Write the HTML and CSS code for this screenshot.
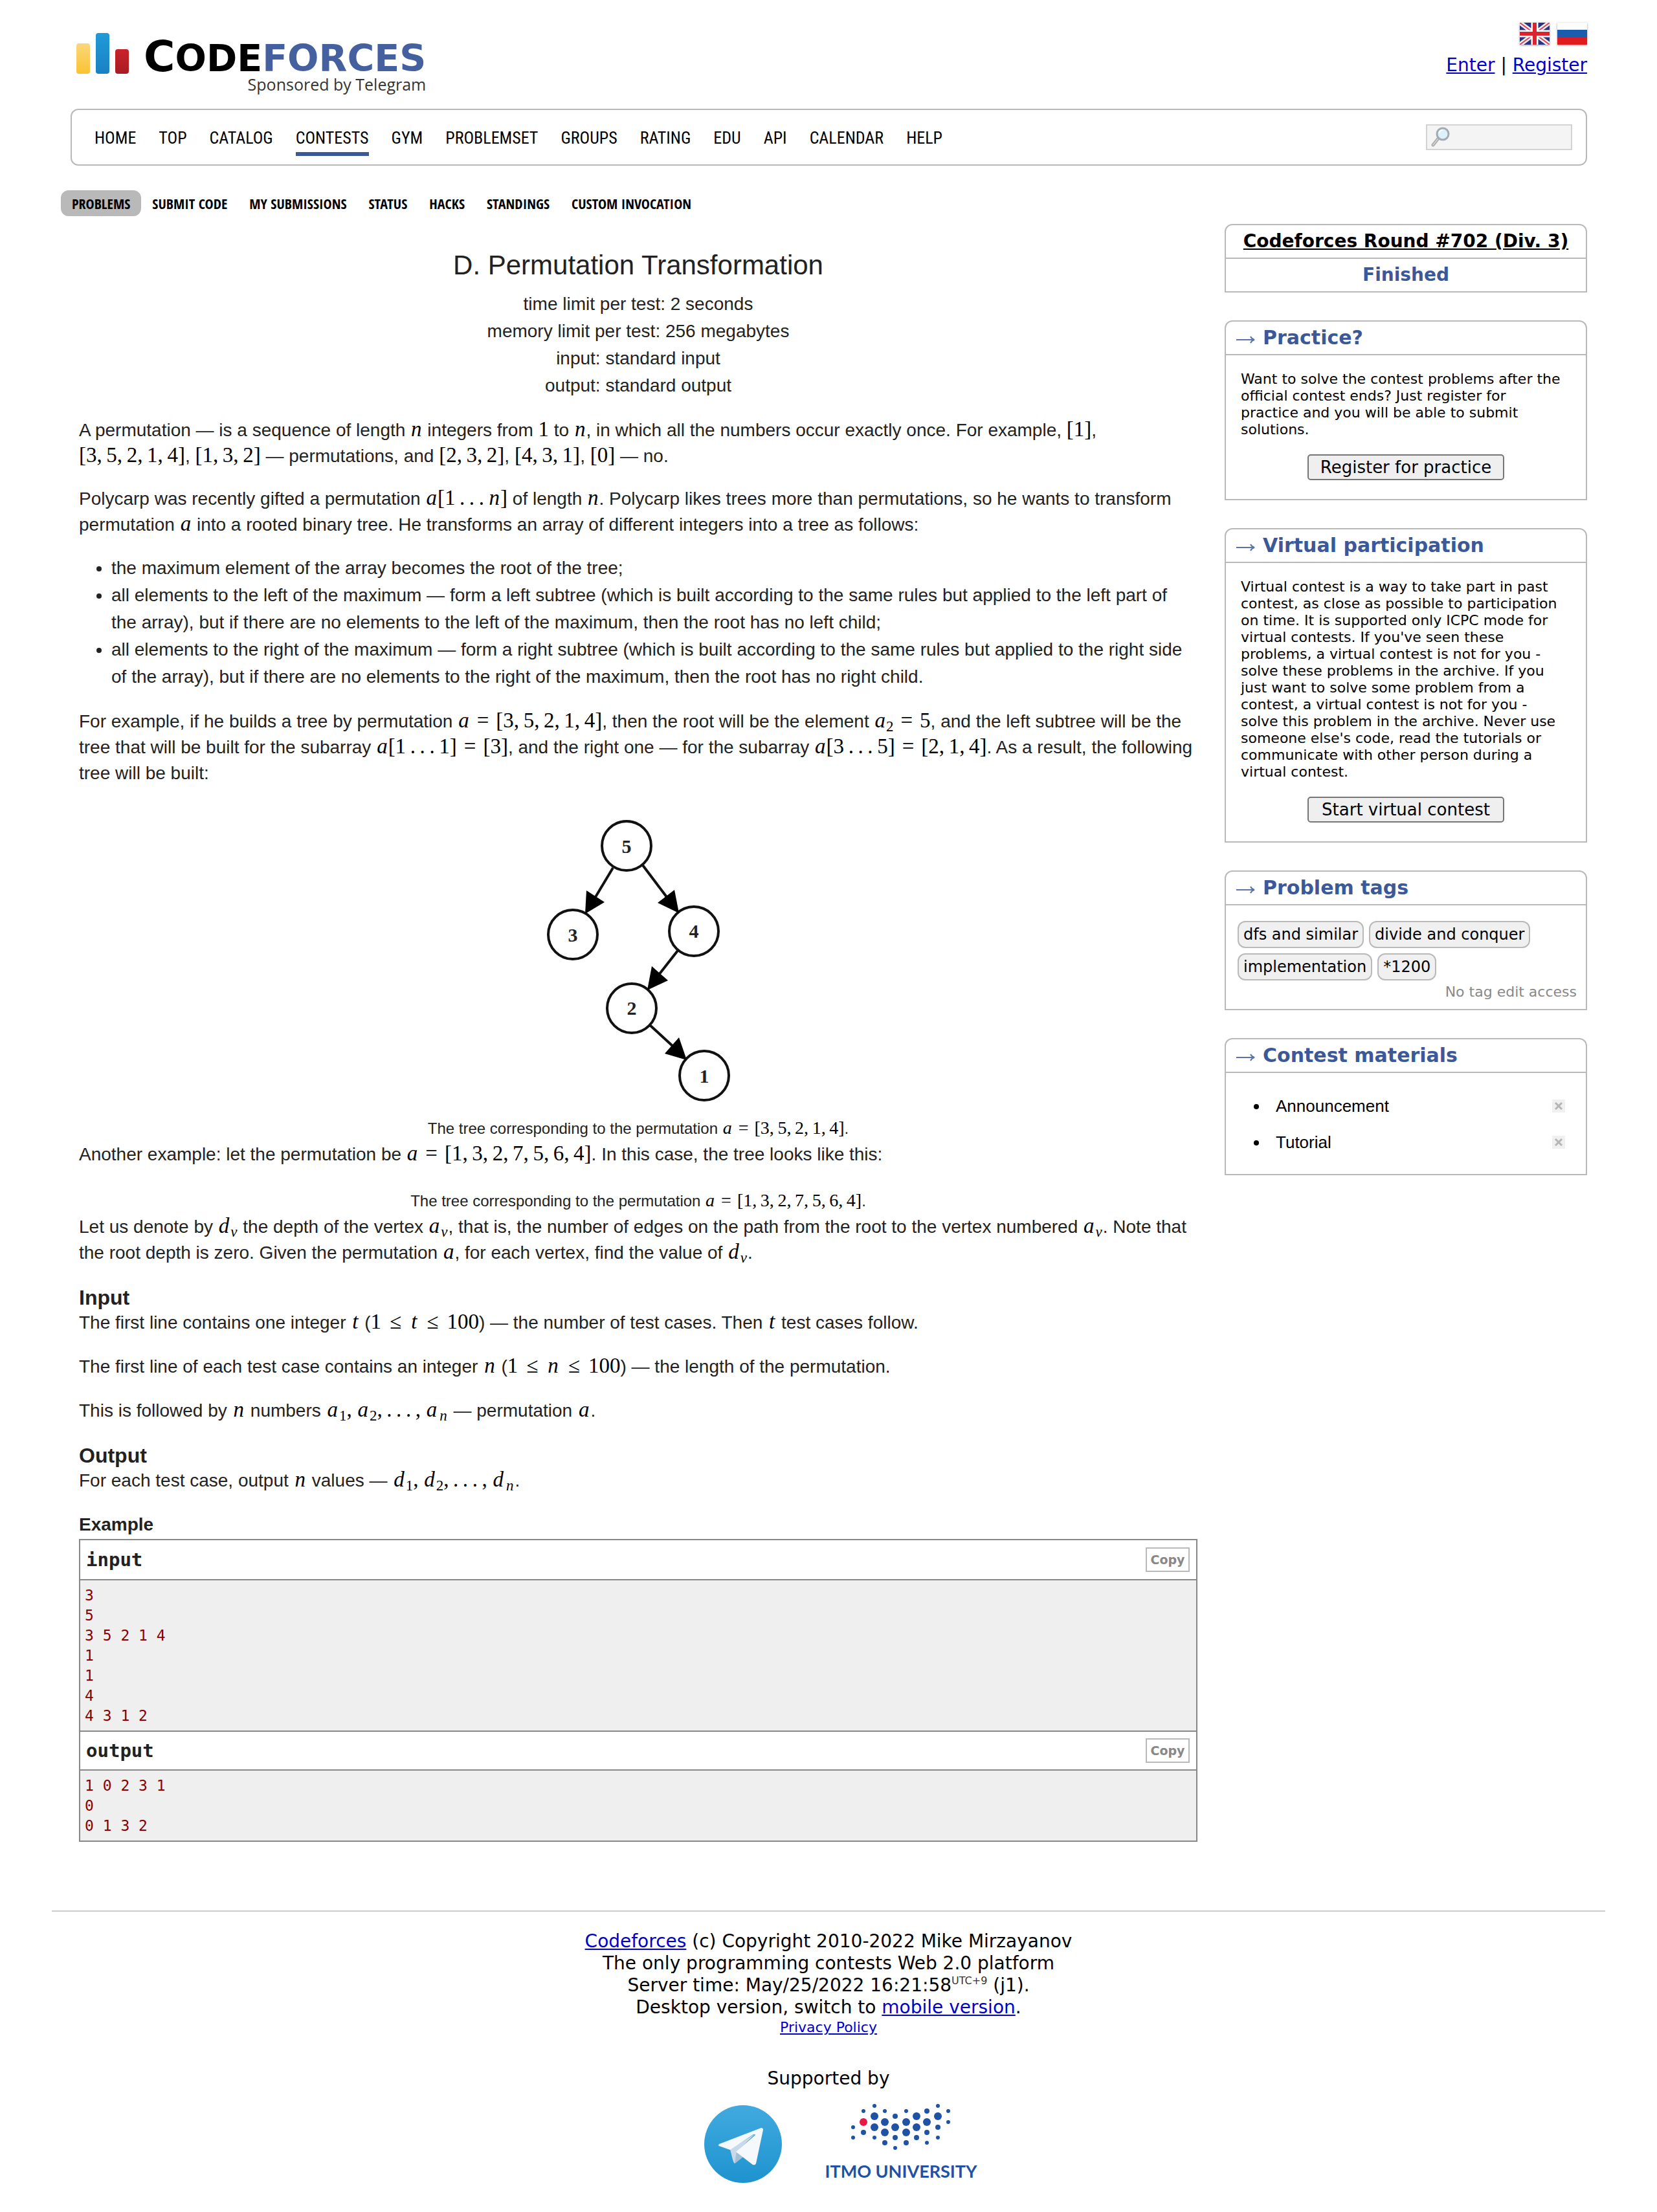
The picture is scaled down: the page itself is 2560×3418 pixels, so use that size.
FILE: index.html
```html
<!DOCTYPE html>
<html lang="en">
<head>
<meta charset="utf-8">
<title>Problem - D - Codeforces</title>
<link rel="stylesheet" href="styles.css">
</head>
<body>
<div class="page">
  <header class="header">
    <a class="brand" href="#">
      <svg class="bars" width="82" height="64" viewBox="0 0 82 64" aria-hidden="true">
        <defs>
          <linearGradient id="gy" x1="0" y1="0" x2="0" y2="1"><stop offset="0" stop-color="#fbd77b"/><stop offset="1" stop-color="#f9c332"/></linearGradient>
          <linearGradient id="gb" x1="0" y1="0" x2="0" y2="1"><stop offset="0" stop-color="#219bd7"/><stop offset="1" stop-color="#1a80c4"/></linearGradient>
          <linearGradient id="gr" x1="0" y1="0" x2="0" y2="1"><stop offset="0" stop-color="#c9222a"/><stop offset="1" stop-color="#a91c23"/></linearGradient>
        </defs>
        <rect x="0" y="16" width="21" height="47" rx="4" fill="url(#gy)"/>
        <rect x="30" y="0" width="21" height="63" rx="4" fill="url(#gb)"/>
        <rect x="60" y="25" width="21" height="38" rx="4" fill="url(#gr)"/>
      </svg>
      <span class="brand-text">
        <span class="wordmark"><span class="initial">C</span>ODE<span class="forces">FORCES</span></span>
        <span class="sponsor">Sponsored by Telegram</span>
      </span>
    </a>
    <div class="account">
      <div class="flags">
        <a href="#" aria-label="English"><svg class="flag" width="46" height="34" viewBox="0 0 46 34">
          <rect width="46" height="34" fill="#2b3480"/>
          <path d="M0 0L46 34M46 0L0 34" stroke="#f3f1f4" stroke-width="7"/>
          <path d="M0 0L46 34M46 0L0 34" stroke="#d8485a" stroke-width="2"/>
          <path d="M23 0V34M0 17H46" stroke="#fff" stroke-width="11"/>
          <path d="M23 0V34M0 17H46" stroke="#dc2430" stroke-width="6"/>
        </svg></a>
        <a href="#" aria-label="Russian"><svg class="flag" width="46" height="34" viewBox="0 0 46 34">
          <rect width="46" height="34" fill="#fcfcfc"/>
          <rect y="11" width="46" height="12" fill="#1a5cae"/>
          <rect y="23" width="46" height="11" fill="#df1b1f"/>
        </svg></a>
      </div>
      <div class="auth"><a href="#">Enter</a> | <a href="#">Register</a></div>
    </div>
  </header>

  <nav class="mainmenu">
    <ul>
      <li><a href="#">HOME</a></li>
      <li><a href="#">TOP</a></li>
      <li><a href="#">CATALOG</a></li>
      <li><a class="current" href="#">CONTESTS</a></li>
      <li><a href="#">GYM</a></li>
      <li><a href="#">PROBLEMSET</a></li>
      <li><a href="#">GROUPS</a></li>
      <li><a href="#">RATING</a></li>
      <li><a href="#">EDU</a></li>
      <li><a href="#">API</a></li>
      <li><a href="#">CALENDAR</a></li>
      <li><a href="#">HELP</a></li>
    </ul>
    <form class="search">
      <svg width="30" height="32" viewBox="0 0 30 32" aria-hidden="true">
        <path d="M3 28L11 18" stroke="#a9a9a9" stroke-width="5" stroke-linecap="round"/>
        <path d="M3 28L11 18" stroke="#d0d0d0" stroke-width="2" stroke-linecap="round"/>
        <circle cx="18" cy="11" r="9" fill="#dcf1fb" stroke="#a3abb1" stroke-width="3"/>
        <path d="M12 10a6 6 0 0 1 6-5" stroke="#fff" stroke-width="2" fill="none"/>
      </svg>
      <input type="text" aria-label="Search">
    </form>
  </nav>

  <nav class="submenu">
    <a class="current" href="#">PROBLEMS</a>
    <a href="#">SUBMIT CODE</a>
    <a href="#">MY SUBMISSIONS</a>
    <a href="#">STATUS</a>
    <a href="#">HACKS</a>
    <a href="#">STANDINGS</a>
    <a href="#">CUSTOM INVOCATION</a>
  </nav>

  <div class="columns">
    <main class="statement">
      <h1>D. Permutation Transformation</h1>
      <div class="limits">
        <div>time limit per test: 2 seconds</div>
        <div>memory limit per test: 256 megabytes</div>
        <div>input: standard input</div>
        <div>output: standard output</div>
      </div>

      <p>A permutation — is a sequence of length <span class="m"><i>n</i></span> integers from <span class="m">1</span> to <span class="m"><i>n</i></span>, in which all the numbers occur exactly once. For example, <span class="m">[1]</span>, <span class="m">[3,&thinsp;5,&thinsp;2,&thinsp;1,&thinsp;4]</span>, <span class="m">[1,&thinsp;3,&thinsp;2]</span> — permutations, and <span class="m">[2,&thinsp;3,&thinsp;2]</span>, <span class="m">[4,&thinsp;3,&thinsp;1]</span>, <span class="m">[0]</span> — no.</p>
      <p>Polycarp was recently gifted a permutation <span class="m"><i>a</i>[1&thinsp;.&thinsp;.&thinsp;.&thinsp;<i>n</i>]</span> of length <span class="m"><i>n</i></span>. Polycarp likes trees more than permutations, so he wants to transform permutation <span class="m"><i>a</i></span> into a rooted binary tree. He transforms an array of different integers into a tree as follows:</p>
      <ul class="rules">
        <li>the maximum element of the array becomes the root of the tree;</li>
        <li>all elements to the left of the maximum — form a left subtree (which is built according to the same rules but applied to the left part of the array), but if there are no elements to the left of the maximum, then the root has no left child;</li>
        <li>all elements to the right of the maximum — form a right subtree (which is built according to the same rules but applied to the right side of the array), but if there are no elements to the right of the maximum, then the root has no right child.</li>
      </ul>
      <p>For example, if he builds a tree by permutation <span class="m"><i>a</i><b>=</b>[3,&thinsp;5,&thinsp;2,&thinsp;1,&thinsp;4]</span>, then the root will be the element <span class="m"><i>a</i><sub>2</sub><b>=</b>5</span>, and the left subtree will be the tree that will be built for the subarray <span class="m"><i>a</i>[1&thinsp;.&thinsp;.&thinsp;.&thinsp;1]<b>=</b>[3]</span>, and the right one — for the subarray <span class="m"><i>a</i>[3&thinsp;.&thinsp;.&thinsp;.&thinsp;5]<b>=</b>[2,&thinsp;1,&thinsp;4]</span>. As a result, the following tree will be built:</p>

      <figure class="tree">
        <svg width="286" height="438" viewBox="843 1265 286 438" role="img" aria-label="Binary tree with root 5">
          <g fill="none" stroke="#111" stroke-width="4">
            <circle cx="968" cy="1307" r="38"/>
            <circle cx="885" cy="1444" r="38"/>
            <circle cx="1072" cy="1439" r="38"/>
            <circle cx="976" cy="1558" r="38"/>
            <circle cx="1088" cy="1662" r="38"/>
            <path d="M947 1341L920 1386M993 1337L1030 1386M1047 1469L1018 1506M1004 1584L1040 1617"/>
          </g>
          <g fill="#000">
            <path d="M904 1412L906 1376L934 1394Z"/>
            <path d="M1049 1411L1042 1375L1016 1395Z"/>
            <path d="M1000 1530L1007 1493L1032 1515Z"/>
            <path d="M1061 1638L1049 1603L1027 1628Z"/>
          </g>
          <g class="node">
            <text x="968" y="1318">5</text>
            <text x="885" y="1455">3</text>
            <text x="1072" y="1449">4</text>
            <text x="976" y="1568">2</text>
            <text x="1088" y="1673">1</text>
          </g>
        </svg>
        <figcaption>The tree corresponding to the permutation <span class="m"><i>a</i><b>=</b>[3,&thinsp;5,&thinsp;2,&thinsp;1,&thinsp;4]</span>.</figcaption>
      </figure>
      <p>Another example: let the permutation be <span class="m"><i>a</i><b>=</b>[1,&thinsp;3,&thinsp;2,&thinsp;7,&thinsp;5,&thinsp;6,&thinsp;4]</span>. In this case, the tree looks like this:</p>
      <figure class="missing">
        <figcaption>The tree corresponding to the permutation <span class="m"><i>a</i><b>=</b>[1,&thinsp;3,&thinsp;2,&thinsp;7,&thinsp;5,&thinsp;6,&thinsp;4]</span>.</figcaption>
      </figure>
      <p>Let us denote by <span class="m"><i>d</i><sub><i>v</i></sub></span> the depth of the vertex <span class="m"><i>a</i><sub><i>v</i></sub></span>, that is, the number of edges on the path from the root to the vertex numbered <span class="m"><i>a</i><sub><i>v</i></sub></span>. Note that the root depth is zero. Given the permutation <span class="m"><i>a</i></span>, for each vertex, find the value of <span class="m"><i>d</i><sub><i>v</i></sub></span>.</p>

      <section class="spec">
        <h2>Input</h2>
        <p>The first line contains one integer <span class="m"><i>t</i></span> (<span class="m">1<b>≤</b><i>t</i><b>≤</b>100</span>) — the number of test cases. Then <span class="m"><i>t</i></span> test cases follow.</p>
        <p>The first line of each test case contains an integer <span class="m"><i>n</i></span> (<span class="m">1<b>≤</b><i>n</i><b>≤</b>100</span>) — the length of the permutation.</p>
        <p>This is followed by <span class="m"><i>n</i></span> numbers <span class="m"><i>a</i><sub>1</sub>,&thinsp;<i>a</i><sub>2</sub>,&thinsp;.&thinsp;.&thinsp;.&thinsp;,&thinsp;<i>a</i><sub><i>n</i></sub></span> — permutation <span class="m"><i>a</i></span>.</p>
      </section>

      <section class="spec">
        <h2>Output</h2>
        <p>For each test case, output <span class="m"><i>n</i></span> values — <span class="m"><i>d</i><sub>1</sub>,&thinsp;<i>d</i><sub>2</sub>,&thinsp;.&thinsp;.&thinsp;.&thinsp;,&thinsp;<i>d</i><sub><i>n</i></sub></span>.</p>
      </section>

      <h3>Example</h3>
      <div class="sample">
        <div class="sample-title">input<button type="button">Copy</button></div>
        <pre>3
5
3 5 2 1 4
1
1
4
4 3 1 2</pre>
        <div class="sample-title">output<button type="button">Copy</button></div>
        <pre>1 0 2 3 1
0
0 1 3 2</pre>
      </div>
    </main>

    <aside class="sidebar">
      <section class="box contest">
        <div class="contest-name"><a href="#">Codeforces Round #702 (Div. 3)</a></div>
        <div class="contest-state">Finished</div>
      </section>

      <section class="box">
        <h4><svg width="29" height="14" viewBox="0 0 29 14" aria-hidden="true"><path d="M0 7H27M22 2Q24 6 28 7Q24 8 22 12" fill="none" stroke="#5a73a8" stroke-width="2"/></svg>Practice?</h4>
        <div class="note">
          <p>Want to solve the contest problems after the official contest ends? Just register for<br>practice and you will be able to submit solutions.</p>
          <button type="button">Register for practice</button>
        </div>
      </section>

      <section class="box">
        <h4><svg width="29" height="14" viewBox="0 0 29 14" aria-hidden="true"><path d="M0 7H27M22 2Q24 6 28 7Q24 8 22 12" fill="none" stroke="#5a73a8" stroke-width="2"/></svg>Virtual participation</h4>
        <div class="note">
          <p>Virtual contest is a way to take part in past contest, as close as possible to participation on time. It is supported only ICPC mode for virtual contests. If you've seen these problems, a virtual contest is not for you - solve these problems in the archive. If you just want to solve some problem from a contest, a virtual contest is not for you - solve this problem in the archive. Never use someone else's code, read the tutorials or communicate with other person during a virtual contest.</p>
          <button type="button">Start virtual contest</button>
        </div>
      </section>

      <section class="box">
        <h4><svg width="29" height="14" viewBox="0 0 29 14" aria-hidden="true"><path d="M0 7H27M22 2Q24 6 28 7Q24 8 22 12" fill="none" stroke="#5a73a8" stroke-width="2"/></svg>Problem tags</h4>
        <div class="tags">
          <span class="tag">dfs and similar</span>
          <span class="tag">divide and conquer</span>
          <span class="tag">implementation</span>
          <span class="tag">*1200</span>
        </div>
        <div class="tag-note">No tag edit access</div>
      </section>

      <section class="box">
        <h4><svg width="29" height="14" viewBox="0 0 29 14" aria-hidden="true"><path d="M0 7H27M22 2Q24 6 28 7Q24 8 22 12" fill="none" stroke="#5a73a8" stroke-width="2"/></svg>Contest materials</h4>
        <ul class="materials">
          <li><a href="#">Announcement</a><svg width="20" height="20" viewBox="0 0 20 20"><rect width="20" height="20" fill="#f0f0f0"/><path d="M5 5L15 15M15 5L5 15" stroke="#b5b5b5" stroke-width="3"/></svg></li>
          <li><a href="#">Tutorial</a><svg width="20" height="20" viewBox="0 0 20 20"><rect width="20" height="20" fill="#f0f0f0"/><path d="M5 5L15 15M15 5L5 15" stroke="#b5b5b5" stroke-width="3"/></svg></li>
        </ul>
      </section>
    </aside>
  </div>

  <footer class="footer">
    <div><a href="#">Codeforces</a> (c) Copyright 2010-2022 Mike Mirzayanov</div>
    <div>The only programming contests Web 2.0 platform</div>
    <div>Server time: May/25/2022 16:21:58<sup>UTC+9</sup> (j1).</div>
    <div>Desktop version, switch to <a href="#">mobile version</a>.</div>
    <div class="privacy"><a href="#">Privacy Policy</a></div>
    <div class="supported">Supported by</div>
    <div class="sponsors">
      <a href="#" aria-label="Telegram"><svg width="120" height="120" viewBox="0 0 120 120">
        <defs><linearGradient id="tg" x1="0" y1="0" x2="0" y2="1"><stop offset="0" stop-color="#41aadf"/><stop offset="1" stop-color="#1e93cf"/></linearGradient></defs>
        <circle cx="60" cy="60" r="60" fill="url(#tg)"/>
        <path d="M40 67L46 89Q48 91 50 88L60 80L50 70Z" fill="#a3bfd6"/>
        <path d="M40 68L79 44L50 72L47 90Q45 88 44 84Z" fill="#c8daea"/>
        <path d="M23 60L88 35Q91 35 91 38L80 90Q79 93 75 92L49 72L79 46Q78 44 76 45L40 69L23 63Q21 62 23 60Z" fill="#f5f9fc"/>
      </svg></a>
      <a href="#" aria-label="ITMO University"><svg width="240" height="122" viewBox="0 0 240 122">
        <g fill="#1f51a5">
          <g>
            <circle cx="79" cy="3" r="3"/><circle cx="177" cy="3" r="3"/>
            <circle cx="62" cy="11" r="3"/><circle cx="95" cy="11" r="3"/><circle cx="128" cy="11" r="3"/><circle cx="193" cy="11" r="3"/>
            <circle cx="46" cy="36" r="3"/><circle cx="193" cy="28" r="3"/><circle cx="46" cy="52" r="3"/><circle cx="79" cy="52" r="3"/>
            <circle cx="177" cy="52" r="3"/><circle cx="160" cy="60" r="3"/><circle cx="111" cy="68" r="3"/>
          </g>
          <g>
            <circle cx="160" cy="11" r="4"/><circle cx="111" cy="19" r="4"/><circle cx="177" cy="36" r="4"/><circle cx="62" cy="44" r="4"/>
            <circle cx="160" cy="44" r="4"/><circle cx="111" cy="52" r="4"/><circle cx="144" cy="52" r="4"/><circle cx="95" cy="60" r="4"/><circle cx="128" cy="60" r="4"/>
          </g>
          <g>
            <circle cx="79" cy="19" r="6"/><circle cx="144" cy="19" r="6"/><circle cx="177" cy="19" r="6"/><circle cx="95" cy="28" r="6"/>
            <circle cx="128" cy="28" r="6"/><circle cx="160" cy="28" r="6"/><circle cx="79" cy="36" r="6"/><circle cx="111" cy="36" r="6"/>
            <circle cx="144" cy="36" r="6"/><circle cx="95" cy="44" r="6"/><circle cx="128" cy="44" r="6"/>
          </g>
        </g>
        <circle cx="62" cy="28" r="6" fill="#ee1846"/>
        <text class="itmo" x="120" y="114">ITMO UNIVERSITY</text>
      </svg></a>
    </div>
  </footer>
</div>
</body>
</html>
```
FILE: styles.css
```css
* { box-sizing: border-box; }

body {
  margin: 0;
  background: #fff;
  color: #000;
  font: 28px/34px "DejaVu Sans", Verdana, sans-serif;
}

a { color: #0000cc; }

.page { padding: 0 80px 45px; }

/* header */
.header {
  display: flex;
  justify-content: space-between;
  align-items: flex-start;
  min-height: 168px;
  padding: 35px 28px 0 38px;
}
.brand {
  display: flex;
  gap: 22px;
  padding-top: 16px;
  color: #000;
  text-decoration: none;
}
.brand-text { display: flex; flex-direction: column; padding-top: 12px; }
.wordmark {
  font: bold 57px/50px "DejaVu Sans", sans-serif;
}
.initial { font-size: 66px; line-height: 50px; }
.forces { color: #44609f; }
.sponsor {
  text-align: right;
  color: #333;
  font: 25px/30px "Open Sans", sans-serif;
}
.account { display: flex; flex-direction: column; align-items: flex-end; gap: 15px; }
.flags { display: flex; gap: 12px; }
.flags a { display: flex; }
.flag { box-shadow: 0 1px 3px rgba(0, 0, 0, 0.4); }

/* menus */
.mainmenu {
  display: flex;
  justify-content: space-between;
  align-items: center;
  height: 88px;
  margin: 0 28px 0 29px;
  padding: 0 21px 0 35px;
  border: 2px solid #b9b9b9;
  border-radius: 12px;
}
.mainmenu ul {
  display: flex;
  gap: 35px;
  margin: 0;
  padding: 12px 0 0;
  list-style: none;
}
.mainmenu li a {
  display: block;
  padding-bottom: 4px;
  border-bottom: 6px solid transparent;
  color: #000;
  font: 26px/36px "Roboto Condensed", "Open Sans Condensed", sans-serif;
  text-decoration: none;
}
.mainmenu li a.current { border-bottom-color: #3b5998; }
.search {
  display: flex;
  align-items: center;
  width: 226px;
  height: 40px;
  padding-left: 6px;
  border: 2px solid #d3d3d3;
  background: #f4f4f4;
}
.search input {
  flex: 1;
  min-width: 0;
  border: 0;
  background: none;
  font: 24px "DejaVu Sans", sans-serif;
  outline: 0;
}
.submenu { display: flex; margin: 38px 0 12px 14px; }
.submenu a {
  padding: 0 17px;
  border-radius: 12px;
  color: #000;
  font: bold 22px/40px "Open Sans Condensed", sans-serif;
  text-decoration: none;
}
.submenu a.current { background: #b9b9b9; }

/* two-column body */
.columns {
  display: flex;
  align-items: flex-start;
  gap: 42px;
  padding: 0 28px 0 42px;
}

/* problem statement */
.statement {
  flex: 1;
  min-width: 0;
  padding-top: 36px;
  color: #222;
  font: 28px/40px "Liberation Sans", Arial, sans-serif;
}
.statement h1 {
  margin: 0 0 11px;
  font-size: 42px;
  line-height: 56px;
  font-weight: normal;
  text-align: center;
}
.limits { margin-bottom: 28px; line-height: 42px; text-align: center; }
.statement p { margin: 0 0 26px; }
.rules { margin: 26px 0 28px; padding: 0 6px 0 50px; line-height: 42px; }
.statement .spec p { margin-bottom: 28px; }
.statement h2 { margin: 30px 0 0; font-size: 32px; line-height: 38px; }
.statement h3 { margin: 30px 0 4px; font-size: 28px; line-height: 36px; }
.statement figure { margin: 0; text-align: center; }
.tree { padding-top: 24px; }
.tree svg { display: block; margin: 0 auto 23px; }
.missing { padding-top: 8px; }
.statement figcaption { font-size: 24px; line-height: 36px; padding-bottom: 2px; }
.node { font: bold 30px "Liberation Serif", serif; text-anchor: middle; fill: #222; }

/* inline formulas */
.m {
  color: #000;
  font: 33px/1 "Liberation Serif", "Times New Roman", serif;
  white-space: nowrap;
}
.m i { padding: 0 1px; }
.m b { padding: 0 11px; font-weight: normal; }
.m sub { font-size: 23px; line-height: 0; vertical-align: -6px; }
.spec .m i { padding: 0 2px; }
.spec .m b { padding: 0 13px; }
figcaption .m { font-size: 28px; }
figcaption .m b { padding: 0 9px; }

/* sample tests */
.sample { border: 2px solid #888; }
.sample-title {
  display: flex;
  justify-content: space-between;
  align-items: center;
  height: 62px;
  padding: 0 10px 0 9px;
  border-bottom: 2px solid #888;
  font: bold 29px/34px "DejaVu Sans Mono", monospace;
}
.sample-title button {
  width: 68px;
  height: 38px;
  padding: 0;
  border: 2px solid #b9b9b9;
  background: #fff;
  color: #888;
  font: bold 19px "DejaVu Sans", sans-serif;
}
.sample pre {
  margin: 0;
  padding: 8px 7px 7px;
  background: #efefef;
  color: #880000;
  font: 23px/31px "DejaVu Sans Mono", monospace;
}
.sample pre + .sample-title { border-top: 2px solid #888; }

/* sidebar */
.sidebar { display: flex; flex-direction: column; gap: 43px; width: 560px; }
.box { border: 2px solid #b9b9b9; border-radius: 12px 12px 0 0; }
.contest { text-align: center; font-weight: bold; }
.contest-name { border-bottom: 2px solid #b9b9b9; line-height: 50px; }
.contest-name a { color: #000; }
.contest-state { color: #3b5998; line-height: 50px; }
.box h4 {
  display: flex;
  align-items: center;
  gap: 12px;
  margin: 0;
  padding: 0 16px;
  border-bottom: 2px solid #b9b9b9;
  color: #3b5998;
  font-size: 30px;
  line-height: 50px;
}
.box h4 svg { margin-top: 6px; }
.note { padding: 24px 36px 24px 23px; }
.note p { margin: 0 0 25px; font-size: 22px; line-height: 26px; }
.note button {
  display: block;
  width: 304px;
  height: 40px;
  margin: 0 0 5px 103px;
  padding: 0;
  border: 2px solid #767676;
  border-radius: 5px;
  background: #efefef;
  color: #000;
  font: 26px "DejaVu Sans", sans-serif;
}
.tags { display: flex; flex-wrap: wrap; gap: 8px; padding: 24px 18px 2px; }
.tag {
  padding: 0 7px;
  border: 2px solid #b9b9b9;
  border-radius: 12px;
  background: #f0f0f0;
  font-size: 24px;
  line-height: 38px;
}
.tag-note { padding: 0 14px 10px; color: #888; font-size: 22px; line-height: 32px; text-align: right; }
.materials { margin: 0; padding: 23px 32px 21px 66px; font: 26px/56px "Liberation Sans", Arial, sans-serif; }
.materials li { padding-left: 11px; }
.materials a { color: #000; text-decoration: none; }
.materials svg { float: right; margin-top: 18px; }

/* footer */
.footer { margin-top: 106px; padding-top: 29px; border-top: 2px solid #ccc; text-align: center; }
.footer sup { color: #333; font-size: 16px; line-height: 0; vertical-align: 11px; }
.privacy { font-size: 22px; line-height: 28px; }
.supported { margin-top: 48px; }
.sponsors { display: flex; justify-content: center; align-items: flex-end; gap: 64px; margin-top: 22px; padding-left: 40px; }
.sponsors a { display: flex; }
.itmo { font: bold 27px Lato, sans-serif; text-anchor: middle; fill: #1f51a5; }
```
